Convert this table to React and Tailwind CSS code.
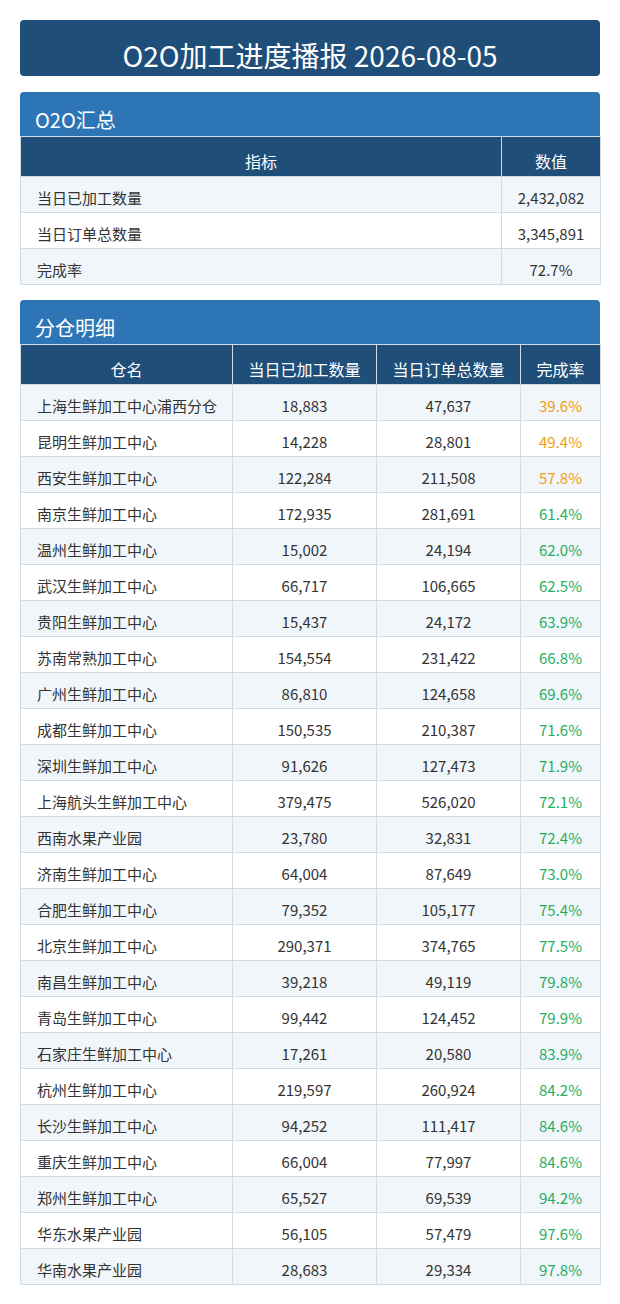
import React from 'react';

const summary = [
  { name: '当日已加工数量', value: '2,432,082' },
  { name: '当日订单总数量', value: '3,345,891' },
  { name: '完成率', value: '72.7%' },
];

const rows = [
  ['上海生鲜加工中心浦西分仓', '18,883', '47,637', 39.6],
  ['昆明生鲜加工中心', '14,228', '28,801', 49.4],
  ['西安生鲜加工中心', '122,284', '211,508', 57.8],
  ['南京生鲜加工中心', '172,935', '281,691', 61.4],
  ['温州生鲜加工中心', '15,002', '24,194', 62.0],
  ['武汉生鲜加工中心', '66,717', '106,665', 62.5],
  ['贵阳生鲜加工中心', '15,437', '24,172', 63.9],
  ['苏南常熟加工中心', '154,554', '231,422', 66.8],
  ['广州生鲜加工中心', '86,810', '124,658', 69.6],
  ['成都生鲜加工中心', '150,535', '210,387', 71.6],
  ['深圳生鲜加工中心', '91,626', '127,473', 71.9],
  ['上海航头生鲜加工中心', '379,475', '526,020', 72.1],
  ['西南水果产业园', '23,780', '32,831', 72.4],
  ['济南生鲜加工中心', '64,004', '87,649', 73.0],
  ['合肥生鲜加工中心', '79,352', '105,177', 75.4],
  ['北京生鲜加工中心', '290,371', '374,765', 77.5],
  ['南昌生鲜加工中心', '39,218', '49,119', 79.8],
  ['青岛生鲜加工中心', '99,442', '124,452', 79.9],
  ['石家庄生鲜加工中心', '17,261', '20,580', 83.9],
  ['杭州生鲜加工中心', '219,597', '260,924', 84.2],
  ['长沙生鲜加工中心', '94,252', '111,417', 84.6],
  ['重庆生鲜加工中心', '66,004', '77,997', 84.6],
  ['郑州生鲜加工中心', '65,527', '69,539', 94.2],
  ['华东水果产业园', '56,105', '57,479', 97.6],
  ['华南水果产业园', '28,683', '29,334', 97.8],
];

const th = 'border border-[#d3dbe5] bg-[#1f4e79] text-white text-[16px] font-normal leading-[24px] pt-[12px] pb-[3px] text-center';
const td = 'border border-[#d3dbe5] text-[15px] leading-[24px] pt-[9px] pb-[2px]';

function SectionHeader({ title }) {
  return (
    <div className="h-[44px] bg-[#2e75b6] rounded-t-[4px] pl-[15px] pt-[12px] flex items-center text-white text-[20px]">
      {title}
    </div>
  );
}

export default function App() {
  return (
    <div
      className="w-[620px] bg-white px-5 pt-5 pb-5"
      style={{ fontFamily: '"Noto Sans CJK SC", "Noto Sans", sans-serif' }}
    >
      {/* Title banner */}
      <div className="h-[56px] bg-[#1f4e79] rounded-[4px] pt-[14px] flex items-center justify-center text-white text-[28px]">
        O2O加工进度播报 2026-08-05
      </div>

      {/* Summary */}
      <div className="mt-4">
        <SectionHeader title="O2O汇总" />
        <table className="w-full border-collapse table-fixed">
          <colgroup>
            <col className="w-[481px]" />
            <col className="w-[99px]" />
          </colgroup>
          <thead>
            <tr>
              <th className={th}>指标</th>
              <th className={th}>数值</th>
            </tr>
          </thead>
          <tbody>
            {summary.map((r, i) => (
              <tr key={r.name} className={i % 2 === 0 ? 'bg-[#f1f6fa]' : 'bg-white'}>
                <td className={`${td} text-[#333333] pl-4 text-left`}>{r.name}</td>
                <td className={`${td} text-[#333333] text-center`}>{r.value}</td>
              </tr>
            ))}
          </tbody>
        </table>
      </div>

      {/* Detail */}
      <div className="mt-[15px]">
        <SectionHeader title="分仓明细" />
        <table className="w-full border-collapse table-fixed">
          <colgroup>
            <col className="w-[212px]" />
            <col className="w-[144px]" />
            <col className="w-[144px]" />
            <col className="w-[80px]" />
          </colgroup>
          <thead>
            <tr>
              <th className={th}>仓名</th>
              <th className={th}>当日已加工数量</th>
              <th className={th}>当日订单总数量</th>
              <th className={th}>完成率</th>
            </tr>
          </thead>
          <tbody>
            {rows.map(([name, done, total, rate], i) => (
              <tr key={name} className={i % 2 === 0 ? 'bg-[#f1f6fa]' : 'bg-white'}>
                <td className={`${td} text-[#333333] pl-4 text-left whitespace-nowrap`}>{name}</td>
                <td className={`${td} text-[#333333] text-center`}>{done}</td>
                <td className={`${td} text-[#333333] text-center`}>{total}</td>
                <td className={`${td} text-center ${rate < 60 ? 'text-[#f39c12]' : 'text-[#27ae60]'}`}>
                  {rate.toFixed(1)}%
                </td>
              </tr>
            ))}
          </tbody>
        </table>
      </div>
    </div>
  );
}
